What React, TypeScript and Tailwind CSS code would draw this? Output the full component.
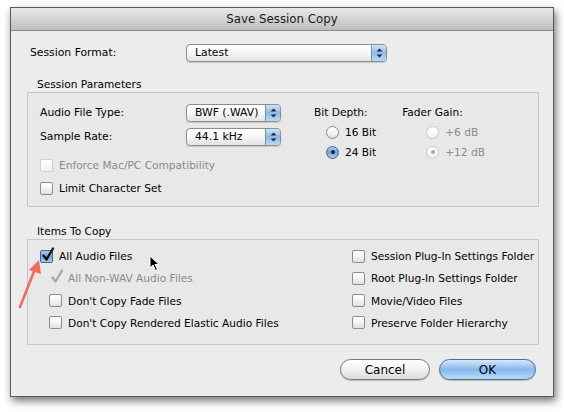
const font = { fontFamily: '"DejaVu Sans", "Liberation Sans", sans-serif' };

function Select({ label, width }: { label: string; width: number }) {
    return (
        <div
            className="flex h-[18px] items-stretch overflow-hidden rounded-[4px] border border-[#8e8e8e] bg-gradient-to-b from-white via-[#f6f6f6] to-[#e2e2e2] shadow-[0_1px_1px_rgba(0,0,0,0.15)]"
            style={{ width }}>
            <div className="flex flex-1 items-center whitespace-nowrap pl-[8px] text-[10.8px] text-black">{label}</div>
            <div className="flex w-[15px] flex-col items-center justify-center gap-[2px] border-l border-[#7d8fa8] bg-gradient-to-b from-[#cfe3f7] via-[#8fbbe8] to-[#bcd9f5]">
                <svg width="7" height="4" viewBox="0 0 7 4">
                    <path d="M0.5 3.5 L3.5 0.5 L6.5 3.5 Z" fill="#1c2b40" />
                </svg>
                <svg width="7" height="4" viewBox="0 0 7 4">
                    <path d="M0.5 0.5 L3.5 3.5 L6.5 0.5 Z" fill="#1c2b40" />
                </svg>
            </div>
        </div>
    );
}

function Checkbox({ label, checked, disabled, box = true }: { label: string; checked?: boolean; disabled?: boolean; box?: boolean }) {
    return (
        <div className="flex h-[14px] items-center gap-[6px]">
            <div className="relative h-[13px] w-[13px] shrink-0">
                {box && (
                    <div
                        className={
                            checked && !disabled
                                ? "h-full w-full rounded-[2px] border border-[#4a6286] bg-gradient-to-b from-[#a9cdf0] via-[#6fa4db] to-[#a5cdf2]"
                                : disabled
                                  ? "h-full w-full rounded-[2px] border border-[#cfcfcf] bg-gradient-to-b from-white to-[#f2f2f2]"
                                  : "h-full w-full rounded-[2px] border border-[#8d8d8d] bg-gradient-to-b from-white via-[#f4f4f4] to-[#e0e0e0]"
                        }
                    />
                )}
                {checked && (
                    <svg className="absolute left-[1px] top-[-3px]" width="14" height="15" viewBox="0 0 14 15">
                        <path
                            d="M2.5 8.5 L5.5 12.5 L12 1.5"
                            fill="none"
                            stroke={disabled ? "#a9a9a9" : "#111"}
                            strokeWidth="2.3"
                            strokeLinecap="round"
                            strokeLinejoin="round"
                        />
                    </svg>
                )}
            </div>
            <span className={`whitespace-nowrap text-[10.6px] leading-[14px] ${disabled ? "text-[#8a8a8a]" : "text-black"}`}>
                {label}
            </span>
        </div>
    );
}

function Radio({ label, on, disabled }: { label: string; on?: boolean; disabled?: boolean }) {
    return (
        <div className="flex h-[14px] items-center gap-[6px]">
            <div
                className={
                    on && !disabled
                        ? "flex h-[13px] w-[13px] items-center justify-center rounded-full border border-[#4a6286] bg-gradient-to-b from-[#a9cdf0] via-[#6fa4db] to-[#a5cdf2]"
                        : disabled
                          ? "flex h-[13px] w-[13px] items-center justify-center rounded-full border border-[#c8c8c8] bg-gradient-to-b from-white to-[#f1f1f1]"
                          : "flex h-[13px] w-[13px] items-center justify-center rounded-full border border-[#8d8d8d] bg-gradient-to-b from-white via-[#f4f4f4] to-[#dedede]"
                }>
                {on && <div className={`h-[4px] w-[4px] rounded-full ${disabled ? "bg-[#a8a8a8]" : "bg-[#1a2230]"}`} />}
            </div>
            <span className={`whitespace-nowrap text-[10.6px] leading-[14px] ${disabled ? "text-[#8a8a8a]" : "text-black"}`}>
                {label}
            </span>
        </div>
    );
}

export default function App() {
    return (
        <div className="relative h-[412px] w-[564px] overflow-hidden bg-white" style={font}>
            <div className="ml-[10px] mt-[7px] flex h-[390px] w-[544px] flex-col border border-[#5a5a5a] bg-[#ececec] shadow-[2px_4px_8px_rgba(0,0,0,0.55)]">
                {/* title bar */}
                <div className="flex h-[23px] shrink-0 items-center justify-center border-b border-[#8b8b8b] bg-gradient-to-b from-[#e9e9e9] via-[#d3d3d3] to-[#bdbdbd] pt-[1px] text-[11.8px] text-[#1a1a1a]">
                    Save Session Copy
                </div>

                <div className="flex flex-col px-[16px] pt-[13px]">
                    <div className="flex items-center">
                        <span className="w-[159px] pl-[3px] text-[10.8px] text-black">Session Format:</span>
                        <Select label="Latest" width={201} />
                    </div>

                    {/* Session Parameters */}
                    <div className="mt-[15px] pl-[10px] text-[10.6px] leading-[14px] text-black">Session Parameters</div>
                    <div className="mt-[1px] flex h-[115px] w-[512px] border border-[#c7c7c7] bg-[#e8e8e8] pl-[12px] pt-[11px]">
                        <div className="flex flex-col">
                            <div className="flex items-center">
                                <span className="w-[146px] text-[10.8px] text-black">Audio File Type:</span>
                                <Select label="BWF (.WAV)" width={95} />
                            </div>
                            <div className="mt-[6px] flex items-center">
                                <span className="w-[146px] text-[10.8px] text-black">Sample Rate:</span>
                                <Select label="44.1 kHz" width={95} />
                            </div>
                            <div className="mt-[12px] flex flex-col gap-[9px]">
                                <Checkbox label="Enforce Mac/PC Compatibility" disabled />
                                <Checkbox label="Limit Character Set" />
                            </div>
                        </div>
                        <div className="ml-[33px] flex flex-col pt-[1px]">
                            <span className="text-[10.6px] leading-[14px] text-black">Bit Depth:</span>
                            <div className="mt-[6px] flex flex-col gap-[6px] pl-[12px]">
                                <Radio label="16 Bit" />
                                <Radio label="24 Bit" on />
                            </div>
                        </div>
                        <div className="ml-[26px] flex flex-col pt-[1px]">
                            <span className="text-[10.6px] leading-[14px] text-black">Fader Gain:</span>
                            <div className="mt-[6px] flex flex-col gap-[6px] pl-[24px]">
                                <Radio label="+6 dB" disabled />
                                <Radio label="+12 dB" on disabled />
                            </div>
                        </div>
                    </div>

                    {/* Items To Copy */}
                    <div className="mt-[17px] pl-[10px] text-[10.6px] leading-[14px] text-black">Items To Copy</div>
                    <div className="mt-[1px] flex h-[106px] w-[512px] justify-between border border-[#c7c7c7] bg-[#e8e8e8] pl-[12px] pr-[10px] pt-[9px]">
                        <div className="flex flex-col gap-[8.3px]">
                            <Checkbox label="All Audio Files" checked />
                            <div className="pl-[9px]">
                                <Checkbox label="All Non-WAV Audio Files" checked disabled box={false} />
                            </div>
                            <div className="pl-[9px]">
                                <Checkbox label="Don't Copy Fade Files" />
                            </div>
                            <div className="pl-[9px]">
                                <Checkbox label="Don't Copy Rendered Elastic Audio Files" />
                            </div>
                        </div>
                        <div className="flex w-[176px] flex-col gap-[8.3px]">
                            <Checkbox label="Session Plug-In Settings Folder" />
                            <Checkbox label="Root Plug-In Settings Folder" />
                            <Checkbox label="Movie/Video Files" />
                            <Checkbox label="Preserve Folder Hierarchy" />
                        </div>
                    </div>

                    {/* buttons */}
                    <div className="mt-[14px] flex justify-end gap-[9px] pr-[1px]">
                        <button className="h-[21px] w-[90px] rounded-full border border-[#7a7a7a] bg-gradient-to-b from-white via-[#f2f2f2] to-[#dadada] text-[12px] text-black shadow-[0_1px_1px_rgba(0,0,0,0.2)]">
                            Cancel
                        </button>
                        <button className="h-[21px] w-[97px] rounded-full border border-[#4f6a8f] bg-gradient-to-b from-[#d6e9fa] via-[#86b9ea] to-[#b7dcfa] text-[12px] text-black shadow-[0_1px_1px_rgba(0,0,0,0.2)]">
                            OK
                        </button>
                    </div>
                </div>
            </div>

            {/* annotation arrow */}
            <svg className="absolute left-[14px] top-[256px]" width="32" height="56" viewBox="0 0 32 56">
                <path d="M6 51 L21 13" stroke="#ec6e5c" strokeWidth="2.6" strokeLinecap="round" />
                <path d="M25 4 L15 14 L27 18 Z" fill="#ec6e5c" />
            </svg>

            {/* mouse cursor */}
            <svg className="absolute left-[149px] top-[255px]" width="12" height="17" viewBox="0 0 12 17">
                <path d="M1 1 L1 13 L4 10 L6.5 15.5 L8.5 14.5 L6 9.5 L10 9.5 Z" fill="#000" stroke="#fff" strokeWidth="1" strokeLinejoin="round" />
            </svg>
        </div>
    );
}
